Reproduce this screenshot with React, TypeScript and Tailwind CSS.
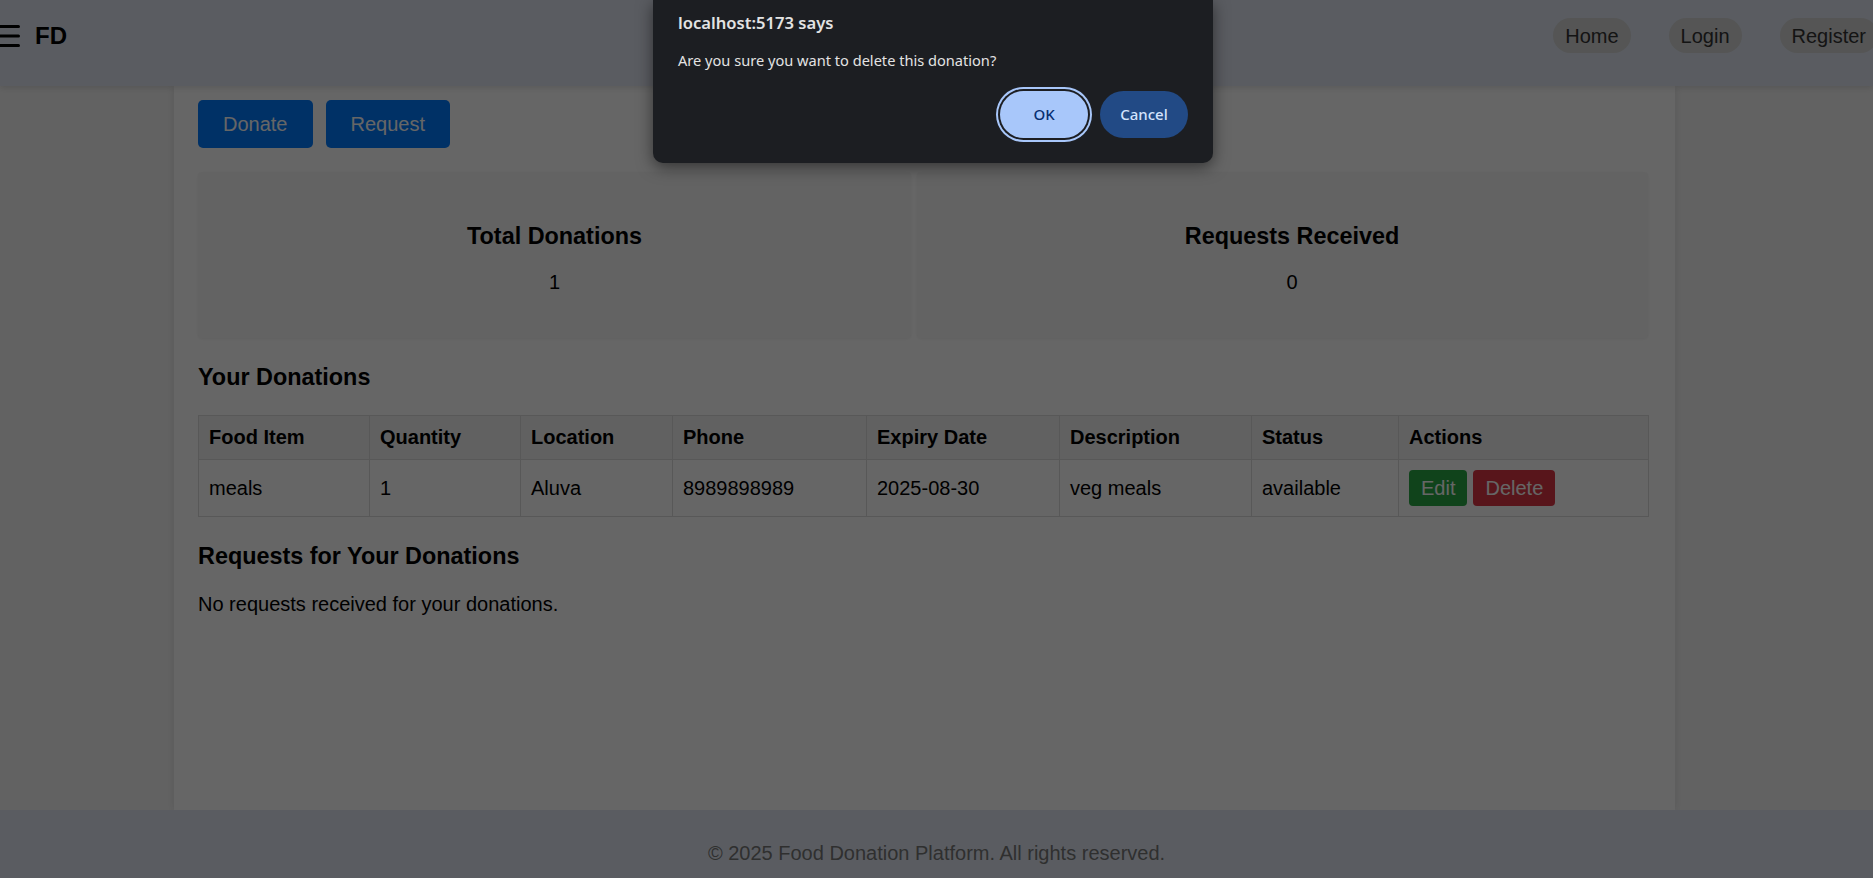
import React from "react";

const donations = [
  {
    item: "meals",
    qty: "1",
    location: "Aluva",
    phone: "8989898989",
    expiry: "2025-08-30",
    desc: "veg meals",
    status: "available",
  },
];

const cols = [
  { label: "Food Item", w: "w-[171px]" },
  { label: "Quantity", w: "w-[151px]" },
  { label: "Location", w: "w-[152px]" },
  { label: "Phone", w: "w-[194px]" },
  { label: "Expiry Date", w: "w-[193px]" },
  { label: "Description", w: "w-[192px]" },
  { label: "Status", w: "w-[147px]" },
  { label: "Actions", w: "w-[250px]" },
];

function Header() {
  return (
    <header className="h-[86px] shrink-0 bg-[#e0e7f2] shadow-[0_2px_6px_rgba(0,0,0,0.12)] flex items-start justify-between pt-[18px] overflow-hidden relative z-10">
      <div className="flex items-center h-[35px] gap-[15px]">
        <svg width="20" height="24" viewBox="0 0 20 24" className="block">
          <rect x="-6" y="1" width="26" height="3" rx="1.5" fill="#000" />
          <rect x="-6" y="10.5" width="26" height="3" rx="1.5" fill="#000" />
          <rect x="-6" y="20" width="26" height="3" rx="1.5" fill="#000" />
        </svg>
        <span className="text-[24px] font-bold text-black leading-none">FD</span>
      </div>
      <nav className="flex gap-[38px] -mr-[5px]">
        {["Home", "Login", "Register"].map((l) => (
          <a
            key={l}
            className="h-[35px] flex items-center px-[12px] rounded-full bg-[#d4d4d4] text-[20px] text-[#333]"
          >
            {l}
          </a>
        ))}
      </nav>
    </header>
  );
}

function StatCard({ title, value, shift }: { title: string; value: string; shift?: boolean }) {
  return (
    <div
      className={`bg-[#f7f7f7] rounded-[4px] shadow-[0_1px_3px_rgba(0,0,0,0.06)] h-[166px] flex flex-col items-center pt-[51px] ${
        shift ? "pl-[19px]" : ""
      }`}
    >
      <h3 className="text-[23.4px] font-bold leading-[27px] text-black">{title}</h3>
      <p className="mt-[21px] text-[20px] leading-[23px] text-black">{value}</p>
    </div>
  );
}

function Dashboard() {
  return (
    <div className="ml-[174px] w-[1501px] h-full bg-white shadow-[0_0_8px_rgba(0,0,0,0.1)] pl-[24px] pr-[27px] pt-[14px]">
      <div className="flex gap-[13px]">
        <button className="h-[48px] px-[25px] rounded-[5px] bg-[#007bff] text-white text-[20px]">Donate</button>
        <button className="h-[48px] px-[25px] rounded-[5px] bg-[#007bff] text-white text-[20px]">Request</button>
      </div>

      <div className="grid grid-cols-[713px_731px] gap-[6px] mt-[24px]">
        <StatCard title="Total Donations" value="1" />
        <StatCard title="Requests Received" value="0" shift />
      </div>

      <h3 className="mt-[26px] text-[23.4px] font-bold leading-[27px] text-black">Your Donations</h3>

      <table className="mt-[24px] w-[1450px] table-fixed border-collapse text-[20px] leading-[23px] text-black">
        <thead>
          <tr className="bg-[#f2f2f2]">
            {cols.map((c) => (
              <th key={c.label} className={`${c.w} border border-[#dddddd] px-[10px] py-[10px] text-left font-bold`}>
                {c.label}
              </th>
            ))}
          </tr>
        </thead>
        <tbody>
          {donations.map((d) => (
            <tr key={d.phone}>
              <td className="border border-[#dddddd] px-[10px] py-[10px]">{d.item}</td>
              <td className="border border-[#dddddd] px-[10px] py-[10px]">{d.qty}</td>
              <td className="border border-[#dddddd] px-[10px] py-[10px]">{d.location}</td>
              <td className="border border-[#dddddd] px-[10px] py-[10px]">{d.phone}</td>
              <td className="border border-[#dddddd] px-[10px] py-[10px]">{d.expiry}</td>
              <td className="border border-[#dddddd] px-[10px] py-[10px]">{d.desc}</td>
              <td className="border border-[#dddddd] px-[10px] py-[10px]">{d.status}</td>
              <td className="border border-[#dddddd] px-[10px] py-[10px]">
                <div className="flex gap-[6px]">
                  <button className="h-[36px] px-[12px] rounded-[4px] bg-[#28a745] text-white text-[20px]">Edit</button>
                  <button className="h-[36px] px-[12px] rounded-[4px] bg-[#dc3545] text-white text-[20px]">Delete</button>
                </div>
              </td>
            </tr>
          ))}
        </tbody>
      </table>

      <h3 className="mt-[26px] text-[23.4px] font-bold leading-[27px] text-black">Requests for Your Donations</h3>
      <p className="mt-[23px] text-[20px] leading-[23px] text-black">No requests received for your donations.</p>
    </div>
  );
}

function ConfirmDialog() {
  return (
    <div className="absolute top-0 left-[653px] w-[560px] h-[163px] bg-[#1c1e22] rounded-b-[10px] shadow-[0_4px_16px_rgba(0,0,0,0.5)] px-[25px] pt-[11px] font-['Noto_Sans',sans-serif] text-[#e3e3e3]">
      <div className="text-[16.6px] font-semibold leading-[24px]">localhost:5173 says</div>
      <div className="mt-[15px] text-[14.6px] leading-[20px]">Are you sure you want to delete this donation?</div>
      <div className="mt-[21px] flex justify-end gap-[12px]">
        <button className="w-[88px] h-[47px] rounded-full bg-[#a8c7fa] text-[#062e6f] text-[15px] font-medium ring-2 ring-[#a8c7fa] ring-offset-2 ring-offset-[#1c1e22]">
          OK
        </button>
        <button className="w-[88px] h-[47px] rounded-full bg-[#224a85] text-[#d3e3fd] text-[15px] font-medium">
          Cancel
        </button>
      </div>
    </div>
  );
}

export default function App() {
  return (
    <div className="relative h-[878px] w-full overflow-hidden bg-[#f5f5f5] flex flex-col font-['Liberation_Sans',Arial,sans-serif]">
      <Header />
      <main className="flex-1 min-h-0">
        <Dashboard />
      </main>
      <footer className="h-[68px] shrink-0 bg-[#e0e7f2] pt-[32px] text-center text-[20px] leading-[23px] text-[#777]">
        © 2025 Food Donation Platform. All rights reserved.
      </footer>

      <div className="absolute inset-0 bg-black/60 z-20" />
      <div className="absolute inset-0 z-30">
        <ConfirmDialog />
      </div>
    </div>
  );
}
